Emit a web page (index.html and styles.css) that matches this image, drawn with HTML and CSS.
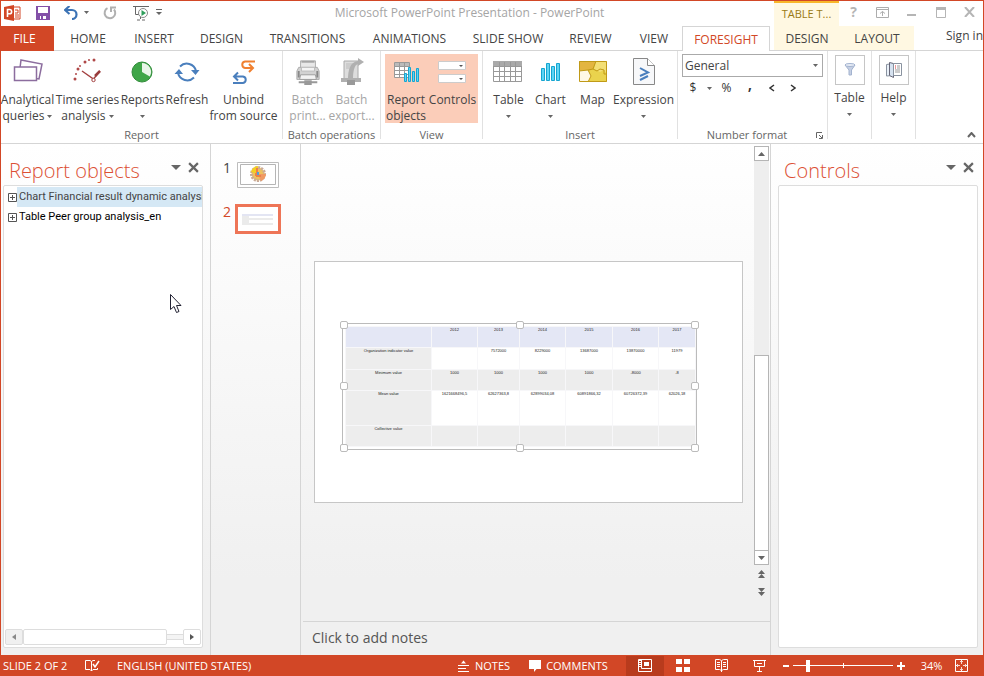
FILE: index.html
```html
<!DOCTYPE html>
<html lang="en">
<head>
<meta charset="utf-8">
<title>Microsoft PowerPoint Presentation - PowerPoint</title>
<link rel="stylesheet" href="styles.css">
</head>
<body>
<svg class="defs" aria-hidden="true">
  <symbol id="caret" viewBox="0 0 5 3"><path d="M0 0h5L2.5 3z" fill="#666"/></symbol>
  <symbol id="close" viewBox="0 0 10 10"><path d="M1 1l8 8M9 1L1 9" stroke="#666" stroke-width="2" fill="none"/></symbol>
  <symbol id="printer" viewBox="0 0 28 30">
    <path d="M6 3h16v9H6z" fill="#e8e8e8" stroke="#aaa"/><path d="M7 3h14v2H7z" fill="#a5a5a5"/>
    <path d="M4 10h20l2 4v9H2v-9z" fill="#d2d2d2" stroke="#aaa"/><path d="M7 10h14v4H7z" fill="#f4f4f4" stroke="#bbb"/>
    <path d="M6 18h16l1 5H5z" fill="#f3f3f3" stroke="#999"/><path d="M3 14h2v7H3zM23 14h2v7h-2z" fill="#888"/>
    <path d="M4 25h20v2H4zM10 24h8v5h-8z" fill="#999"/>
  </symbol>
</svg>
<div class="window">
  <header class="titlebar">
    <div class="quick">
      <svg width="18" height="16" viewBox="0 0 18 16"><path d="M0 2l10-2v16L0 14z" fill="#d24726"/><path d="M10 2h6v12h-6" fill="#fff" stroke="#d24726"/><path d="M11 5h3v3h-3M11 10h4M11 12h4" stroke="#d24726" fill="none"/><path d="M3.500 12V4.500h2a2 2 0 010 4.300h-2" stroke="#fff" stroke-width="1.600" fill="none"/></svg>
      <button aria-label="Save"><svg width="14" height="14" viewBox="0 0 14 14"><path d="M0 0h14v14H0z" fill="#8350a8"/><path d="M2 1h10v6H2zM4 10h6v3H4z" fill="#fff"/><path d="M5 10h2v3H5z" fill="#8350a8"/></svg></button>
      <button aria-label="Undo"><svg width="14" height="14" viewBox="0 0 14 14"><path d="M1 4h7a4.500 4.500 0 010 9" fill="none" stroke="#3c73b5" stroke-width="2.200"/><path d="M5.500 0L1 4l4.500 4" fill="none" stroke="#3c73b5" stroke-width="2.200"/></svg></button>
      <button aria-label="Undo list" class="slim"><svg width="5" height="3"><use href="#caret"/></svg></button>
      <button aria-label="Repeat"><svg width="14" height="14" viewBox="0 0 14 14"><path d="M4.500 2.200A5.300 5.300 0 1011 3.500" fill="none" stroke="#b0b0b0" stroke-width="2"/><path d="M8 6V1.500h5" fill="none" stroke="#b0b0b0" stroke-width="2"/></svg></button>
      <button aria-label="Start slide show" class="show"><svg width="17" height="16" viewBox="0 0 17 16"><path d="M0 1.500h16M2.500 2v7.500H7M7.500 11v3M4 15h3M9 15h3" fill="none" stroke="#666"/><circle cx="10" cy="8" r="4.500" fill="#fff" stroke="#888"/><path d="M8.500 5l4.500 3-4.500 3z" fill="#2e9e5b"/></svg></button>
      <button aria-label="Customize" class="slim"><svg width="6" height="7" viewBox="0 0 6 7"><path d="M0 .5h6" stroke="#666"/><path d="M0 3h6L3 6z" fill="#666"/></svg></button>
    </div>
    <h1>Microsoft PowerPoint Presentation - PowerPoint</h1>
    <div class="context">TABLE T...</div>
    <div class="winbuttons">
      <button aria-label="Help" class="q">?</button>
      <button aria-label="Ribbon display"><svg width="13" height="11" viewBox="0 0 13 11" fill="none" stroke="#adadad"><path d="M.5.5h12v10H.5zM.5 2.500h12M6.500 9V4.500M4 6.500l2.500-2L9 6.500"/></svg></button>
      <button aria-label="Minimize"><svg width="9" height="10"><path d="M0 7h9v2H0z" fill="#b5b5b5"/></svg></button>
      <button aria-label="Maximize"><svg width="10" height="11"><path d="M.5.5h9v10h-9z" fill="none" stroke="#b5b5b5"/><path d="M0 0h10v3H0z" fill="#b5b5b5"/></svg></button>
      <button aria-label="Close"><svg width="11" height="10" viewBox="0 0 11 10"><path d="M1 0l9 10M10 0L1 10" stroke="#b5b5b5" stroke-width="2"/></svg></button>
    </div>
  </header>
  <nav class="tabs">
    <button class="file">FILE</button><button>HOME</button><button>INSERT</button><button>DESIGN</button><button>TRANSITIONS</button><button>ANIMATIONS</button><button>SLIDE SHOW</button><button>REVIEW</button><button>VIEW</button><button class="active">FORESIGHT</button>
    <button class="ctx first">DESIGN</button><button class="ctx">LAYOUT</button>
    <a href="#" class="signin">Sign in</a>
  </nav>
  <section class="ribbon">
    <div class="group g-report">
      <div class="tools">
        <button><svg width="30" height="28" viewBox="0 0 30 28"><g fill="#fff" stroke="#8c6d9e" stroke-width="1.500"><path d="M8 2l21 4-3 15-20-3z"/><path d="M1.500 9h22v13.500h-22z"/></g></svg><span>Analytical<br>queries <svg class="caret"><use href="#caret"/></svg></span></button>
        <button><svg width="30" height="28" viewBox="0 0 30 28"><g fill="#b04848"><circle cx="3" cy="21" r="1.500"/><circle cx="4" cy="16" r="1"/><circle cx="6" cy="11" r="1.500"/><circle cx="8" cy="8" r="1"/><circle cx="13" cy="4" r="1.500"/><circle cx="17" cy="2" r="1"/><circle cx="22" cy="2" r="1.500"/></g><path d="M10 13l11.500 8L28 13" fill="none" stroke="#a34040" stroke-width="1.400"/><path d="M23 18l5-5" stroke="#983c3c" stroke-width="2.500"/><circle cx="21.500" cy="22" r="1.700" fill="#fff" stroke="#a34040"/></svg><span>Time series<br>analysis <svg class="caret"><use href="#caret"/></svg></span></button>
        <button><svg width="24" height="28" viewBox="0 0 24 28"><circle cx="11" cy="14" r="10" fill="#3fa648" stroke="#328c3b"/><path d="M11 14V5a9 9 0 017.800 13.500z" fill="#e9f6e9"/></svg><span>Reports<br><svg class="caret"><use href="#caret"/></svg></span></button>
        <button><svg width="26" height="28" viewBox="0 0 26 28"><g fill="none" stroke="#4a7fbd" stroke-width="2"><path d="M6 8.500a9.500 9.500 0 0116 4.500M20 19.500a9.500 9.500 0 01-16-4.500"/></g><path d="M17 12h8.500l-4 5zM.5 16H9l-4-5z" fill="#4a7fbd"/></svg><span>Refresh</span></button>
        <button><svg width="24" height="28" viewBox="0 0 24 28" fill="none" stroke-width="2"><path d="M23 3.500H13a3.300 3.300 0 000 6.500h7M17 6l4 4-4 4" stroke="#f08030"/><path d="M10 16h1a3.300 3.300 0 010 9H3" stroke="none"/><path d="M1 25h10a3.300 3.300 0 000-6.500H3M6 14.500l-4 4 4 4" stroke="#4a7fbd"/></svg><span>Unbind<br>from source</span></button>
      </div><h2>Report</h2>
    </div>
    <div class="group g-batch">
      <div class="tools">
        <button disabled><svg width="26" height="28"><use href="#printer"/></svg><span>Batch<br>print...</span></button>
        <button disabled><svg width="28" height="28" viewBox="0 0 28 28"><path d="M6 3h14v20H6z" fill="#ddd" stroke="#aaa"/><path d="M8 6h8M8 8h8M8 10h5" stroke="#bbb"/><path d="M10 22C10 12 12 4 20 3V0l6 4-6 4V6c-4 1-5 8-5 16z" fill="#b0b0b0"/><path d="M3 20h20v4H3z" fill="#b0b0b0"/><path d="M9 22h8v5H9z" fill="#999"/></svg><span>Batch<br>export...</span></button>
      </div><h2>Batch operations</h2>
    </div>
    <div class="group g-view">
      <div class="tools">
        <button><svg width="28" height="28" viewBox="0 0 28 28"><path d="M2.500 4.500h15v15h-15z" fill="#fff" stroke="#999"/><path d="M3 5h14v3H3z" fill="#bbb"/><path d="M3 8.500h14M3 12.500h14M3 16.500h14M7.500 5v14M12.500 5v14" stroke="#999"/><g fill="#5dd4f4" stroke="#16a5d0"><path d="M12.500 15.500h2v8h-2zM16.500 9.500h2v14h-2zM20.500 13.500h2v10h-2zM24.500 10.500h2v13h-2z"/></g></svg><span>Report<br>objects</span></button>
        <button><svg width="28" height="28" viewBox="0 0 28 28"><path d="M.5 3.500h27v8H.5zM.5 16.500h27v8H.5z" fill="#fff" stroke="#ccc"/><path d="M21 7h4l-2 2zM21 20h4l-2 2z" fill="#555"/></svg><span>Controls</span></button>
      </div><h2>View</h2>
    </div>
    <div class="group g-insert">
      <div class="tools">
        <button><svg width="30" height="28" viewBox="0 0 30 28"><path d="M.5 3.500h28v20h-28z" fill="#fff" stroke="#999"/><path d="M0 3h29v5H0z" fill="#aaa"/><path d="M1 8.500h27M1 13.500h27M1 18.500h27M6.500 4v20M11.500 4v20M17.500 4v20M22.500 4v20" stroke="#999" fill="none"/></svg><span>Table<br><svg class="caret"><use href="#caret"/></svg></span></button>
        <button><svg width="20" height="28" viewBox="0 0 20 28" fill="#5dd4f4" stroke="#16a5d0"><path d="M.5 10.500h3v12h-3zM5.500 5.500h3v17h-3zM10.500 8.500h3v14h-3zM15.500 5.500h3v17h-3z"/></svg><span>Chart<br><svg class="caret"><use href="#caret"/></svg></span></button>
        <button><svg width="30" height="28" viewBox="0 0 30 28"><path d="M1 3h28v21H1z" fill="#ead34d"/><path d="M1 3h17l-3 8-4 2H1z" fill="#e3b541"/><path d="M1 13l9-1 3 6-3 6H1z" fill="#fff8e6"/><path d="M18 3h11v13l-3-4-4 2-6-3z" fill="#f3df75"/><path d="M1.500 3.500h27v20h-27zM1 13l9-1 3 6-3 6M10 12l5-1 3-8M15 11l4 2 3-2 4 1v4h3" fill="none" stroke="#c09a18"/></svg><span>Map</span></button>
        <button><svg width="22" height="28" viewBox="0 0 22 28"><path d="M.5.5h14l7 7v19H.5z" fill="#f7f8fa" stroke="#888"/><path d="M14.500.5v7h7" fill="#fff" stroke="#888"/><path d="M7 10l8 4.500L7 18M15 18l-8 4" fill="none" stroke="#4a7fbd" stroke-width="2"/></svg><span>Expression<br><svg class="caret"><use href="#caret"/></svg></span></button>
      </div><h2>Insert</h2>
    </div>
    <div class="group g-number">
      <div class="tools">
        <label class="combo"><select aria-label="Number format"><option>General</option></select><svg class="caret"><use href="#caret"/></svg></label>
        <div class="formats"><button>$</button><button aria-label="Currencies"><svg class="caret"><use href="#caret"/></svg></button><button>%</button><button class="comma">,</button><button aria-label="Fewer decimals"><svg width="6" height="8"><path d="M5 1L1 4l4 3" fill="none" stroke="#333" stroke-width="1.500"/></svg></button><button aria-label="More decimals"><svg width="6" height="8"><path d="M1 1l4 3-4 3" fill="none" stroke="#333" stroke-width="1.500"/></svg></button></div>
      </div>
      <h2>Number format <svg class="launch" width="7" height="7" viewBox="0 0 7 7"><path d="M.5 6V.5H6M3 3l3 3M6.500 3v3.500H3" fill="none" stroke="#666"/></svg></h2>
    </div>
    <div class="group g-mini"><button><i><svg width="12" height="14" viewBox="0 0 12 14"><path d="M1 2l4 5v5h2.500V7l3.500-5z" fill="#c5cfe3" stroke="#a3b3cf"/><ellipse cx="6" cy="2" rx="5" ry="1.500" fill="#e8edf6" stroke="#a3b3cf"/></svg></i><span>Table<br><svg class="caret"><use href="#caret"/></svg></span></button></div>
    <div class="group g-mini"><button><i><svg width="18" height="18" viewBox="0 0 18 18"><path d="M1.500 3.500l7-1v12l-7 .5z" fill="#e9f0f8" stroke="#8a93a0"/><path d="M4.500 1.500l4 1v14l-4-2z" fill="#d6e2f0" stroke="#667"/><path d="M8.500 2.500h8v12h-8z" fill="#fff" stroke="#8a93a0"/><path d="M10 5h1M10 7h1" stroke="#d33"/><path d="M12 5h3M12 7h3M10 9h5M10 11h5" stroke="#999"/></svg></i><span>Help<br><svg class="caret"><use href="#caret"/></svg></span></button></div>
    <button class="collapse" aria-label="Collapse ribbon"><svg width="9" height="6"><path d="M1 5l3.500-4L8 5" fill="none" stroke="#666" stroke-width="2"/></svg></button>
  </section>
  <main class="work">
    <aside class="pane left">
      <div class="panehead"><h2>Report objects</h2><button aria-label="Pane options"><svg width="10" height="5" viewBox="0 0 10 5"><path d="M0 0h10L5 5z" fill="#666"/></svg></button><button aria-label="Close pane"><svg width="11" height="11"><use href="#close"/></svg></button></div>
      <div class="box">
        <ul class="tree">
          <li class="sel"><button aria-label="Expand"><svg width="9" height="9"><path d="M.5.5h8v8h-8zM2 4.500h5M4.500 2v5" fill="none" stroke="#555"/></svg></button><span>Chart Financial result dynamic analysis</span></li>
          <li><button aria-label="Expand"><svg width="9" height="9"><path d="M.5.5h8v8h-8zM2 4.500h5M4.500 2v5" fill="none" stroke="#555"/></svg></button><span>Table Peer group analysis_en</span></li>
        </ul>
        <div class="hscroll"><button aria-label="Scroll left" disabled><svg width="4" height="6"><path d="M4 0v6L0 3z" fill="#888"/></svg></button><div class="thumb"></div><div class="track"></div><button aria-label="Scroll right"><svg width="4" height="6"><path d="M0 0v6l4-3z" fill="#555"/></svg></button></div>
      </div>
    </aside>
    <nav class="slides">
      <div class="slide-item"><b>1</b><svg width="42" height="26" viewBox="0 0 42 26"><path d="M.5.5h41v25H.5z" fill="#fff" stroke="#bdbdbd"/><path d="M3.500 2.500h35v20h-35z" fill="none" stroke="#b5b5b5"/><circle cx="21" cy="12" r="6.500" fill="#efc25c" stroke="#c9aa98" stroke-width="3" stroke-dasharray="2 1"/><path d="M21 12V4a8 8 0 00-7 6z" fill="#f4cf22"/><path d="M21 12h8a8 8 0 01-5 7z" fill="#f09a62"/><path d="M20 6v8h4M19 11v3" stroke="#ec7f4b" stroke-width="2" fill="none"/><path d="M20 10h2v3h-2z" fill="#4ea0dd"/></svg></div>
      <div class="slide-item on"><b>2</b><svg width="46" height="30" viewBox="0 0 46 30"><path d="M1.500 1.500h43v27h-43z" fill="#fff" stroke="#ee7557" stroke-width="3"/><path d="M7 10h31v2H7z" fill="#e3e5f3"/><path d="M7 12h7v9H7zM14 14h24v2H14zM14 19h24v2H14z" fill="#ebebeb"/></svg></div>
    </nav>
    <section class="editor">
      <div class="canvas">
        <div class="stage">
          <div class="slide">
            <div class="frame">
              <table>
                <colgroup><col class="c0"><col class="c1"><col class="c2"><col class="c1"><col class="c3"><col class="c1"><col class="c4"></colgroup>
                <tr class="head"><th></th><th>2012</th><th>2013</th><th>2014</th><th>2015</th><th>2016</th><th>2017</th></tr>
                <tr><th>Organization indicator value</th><td></td><td>7572000</td><td>8229000</td><td>13687000</td><td>13870000</td><td>11979</td></tr>
                <tr class="alt"><th>Minimum value</th><td>1000</td><td>1000</td><td>1000</td><td>1000</td><td>-8000</td><td>-8</td></tr>
                <tr class="tall"><th>Mean value</th><td>1621668496,5</td><td>62627363,8</td><td>62899034,08</td><td>60891866,32</td><td>60726372,39</td><td>62026,18</td></tr>
                <tr class="alt"><th>Collective value</th><td></td><td></td><td></td><td></td><td></td><td></td></tr>
              </table>
              <i class="h nw"></i><i class="h n"></i><i class="h ne"></i><i class="h w"></i><i class="h e"></i><i class="h sw"></i><i class="h s"></i><i class="h se"></i>
            </div>
          </div>
        </div>
        <div class="vscroll">
          <button aria-label="Scroll up"><svg width="7" height="4"><path d="M0 4h7L3.500 0z" fill="#666"/></svg></button>
          <div class="track"></div><div class="thumb"></div>
          <button aria-label="Scroll down"><svg width="7" height="4"><path d="M0 0h7L3.500 4z" fill="#666"/></svg></button>
          <button class="page" aria-label="Previous slide"><svg width="7" height="8"><path d="M0 4h7L3.500 0zM0 8h7L3.500 4z" fill="#666"/></svg></button>
          <button class="page" aria-label="Next slide"><svg width="7" height="8"><path d="M0 0h7L3.500 4zM0 4h7L3.500 8z" fill="#666"/></svg></button>
        </div>
      </div>
      <div class="notes">Click to add notes</div>
    </section>
    <aside class="pane right">
      <div class="panehead"><h2>Controls</h2><button aria-label="Pane options"><svg width="10" height="5" viewBox="0 0 10 5"><path d="M0 0h10L5 5z" fill="#666"/></svg></button><button aria-label="Close pane"><svg width="11" height="11"><use href="#close"/></svg></button></div>
      <div class="box"></div>
    </aside>
    <svg class="cursor" width="13" height="20" viewBox="0 0 13 20"><path d="M.5.5v15l3.500-3 2.500 6 2.500-1-2.500-6H11z" fill="#fff" stroke="#223"/></svg>
  </main>
  <footer class="status">
    <span class="count">SLIDE 2 OF 2</span>
    <button class="proof" aria-label="Proofing"><svg width="16" height="13" viewBox="0 0 16 13" fill="none" stroke="#fff"><path d="M6.500 2.500L5 1.500H.5v9H5l1.500 1.500L8 10.500h4.500V9M6.500 2.500V12M6.500 2.500L8 1.500h2"/><path d="M8 5l2 3 4-6" stroke-width="1.500"/></svg></button>
    <span>ENGLISH (UNITED STATES)</span>
    <span class="grow"></span>
    <button class="notesbtn"><svg width="12" height="12" viewBox="0 0 12 12"><path d="M3 3.500L5.500.5 8 3.500z" fill="#fff"/><path d="M0 5.500h11M0 8.500h8M0 11.500h11" stroke="#fff"/></svg>NOTES</button>
    <button class="comments"><svg width="12" height="12" viewBox="0 0 12 12"><path d="M0 0h12v9H7.500L5 12V9H0z" fill="#fff"/></svg>COMMENTS</button>
    <button class="view on" aria-label="Normal"><svg width="14" height="13" viewBox="0 0 14 13"><path d="M.5.5h13v12H.5zM3.500 1v8.500H13" fill="none" stroke="#fff"/><path d="M1 1h2v1H1zM1 3h2v1H1zM1 5h2v1H1zM1 7h2v1H1zM6 3h5v4H6z" fill="#fff"/></svg></button>
    <button class="view" aria-label="Slide sorter"><svg width="14" height="13"><path d="M0 0h6v5H0zM8 0h6v5H8zM0 8h6v5H0zM8 8h6v5H8z" fill="#fff"/></svg></button>
    <button class="view" aria-label="Reading view"><svg width="13" height="13" viewBox="0 0 13 13" fill="none" stroke="#fff"><path d="M.5.500h4l2 1 2-1h4v10h-4l-2 1-2-1h-4zM6.500 2v11M2 3.500h3M2 5.500h3M2 7.500h3M8 3.500h3M8 5.500h3M8 7.500h3"/></svg></button>
    <button class="view" aria-label="Slide show"><svg width="13" height="13" viewBox="0 0 13 13" fill="none" stroke="#fff"><path d="M0 1.500h13M1.500 2v5.500h10V2M6.500 8v4M4 12.500h5M4 4.500h5"/></svg></button>
    <button class="zoomb" aria-label="Zoom out"><svg width="6" height="8"><path d="M0 3h6v2H0z" fill="#fff"/></svg></button>
    <span class="range"><input type="range" aria-label="Zoom" min="0" max="100" value="14"></span>
    <button class="zoomb" aria-label="Zoom in"><svg width="8" height="8"><path d="M3 0h2v3h3v2H5v3H3V5H0V3h3z" fill="#fff"/></svg></button>
    <span class="pct">34%</span>
    <button class="fit" aria-label="Fit slide"><svg width="13" height="13" viewBox="0 0 13 13" fill="none" stroke="#fff"><path d="M.5.5h12v12H.5z"/><path d="M6.500 1v4M5 3l1.500-1.500L8 3M6.500 12V8M5 10l1.500 1.500L8 10M1 6.500h4M8 6.500h4M3 5L1.500 6.500 3 8M10 5l1.500 1.500L10 8" stroke-width=".8"/></svg></button>
  </footer>
</div>
</body>
</html>
```

FILE: styles.css
```css
* { box-sizing: border-box; }
body { margin: 0; font: 12px/16px "Open Sans", "Noto Sans", sans-serif; color: #444; background: #fff; }
button { border: 0; padding: 0; margin: 0; background: none; font: inherit; color: inherit; }
h1, h2 { margin: 0; font: inherit; }
svg { display: block; flex: none; }
.defs { position: absolute; width: 0; height: 0; }
.caret { display: inline-block; width: 5px; height: 3px; vertical-align: middle; }
.window { display: flex; flex-direction: column; min-height: 100vh; border: 1px solid #d24726; border-bottom: 0; overflow: hidden; }

.titlebar { display: grid; grid-template-columns: auto 1fr 65px 144px; height: 25px; }
.quick { display: flex; align-items: center; gap: 14px; padding: 0 3px; height: 23px; }
.quick .slim { margin-left: -8px; }
.quick .show { margin-left: 2px; }
.titlebar h1 { text-align: center; color: #a5a5a5; line-height: 24px; }
.context { background: #fff8e2; border-top: 2px solid #f8b62a; color: #9a7a14; text-align: center; line-height: 22px; font-size: 11px; }
.winbuttons { display: grid; grid-template-columns: repeat(5, 29px); height: 22px; }
.winbuttons button { display: grid; place-items: center; }
.winbuttons .q { font-size: 14px; font-weight: 700; color: #b5b5b5; }

.tabs { display: grid; grid-template-columns: 53px 66px 66px 69px 103px 101px 96px 69px 58px 88px 4px 66px 74px 1fr; height: 25px; box-shadow: inset 0 -1px #d5d5d5; }
.tabs button { line-height: 25px; white-space: nowrap; text-align: center; padding-left: 2px; }
.tabs .file { background: #d24726; color: #fff; padding: 0 6px 0 0; }
.tabs .active { background: #fff; color: #d24726; border: 1px solid #d5d5d5; border-bottom: 0; line-height: 23px; padding: 0; }
.tabs .ctx { background: #fff8e2; box-shadow: inset 0 -1px #d5d5d5; padding: 0; }
.tabs .first { grid-column: 12; }
.signin { margin-left: 32px; line-height: 20px; color: #444; text-decoration: none; white-space: nowrap; }

.ribbon { display: flex; height: 93px; border-bottom: 1px solid #d5d5d5; }
.group { display: flex; flex: none; flex-direction: column; border-right: 1px solid #e1e1e1; padding-top: 3px; height: 88px; }
.group h2 { text-align: center; line-height: 12px; font-size: 11px; color: #666; margin-top: 6px; white-space: nowrap; }
.tools { display: grid; flex: none; height: 69px; }
.tools > button { display: flex; flex-direction: column; align-items: center; padding-top: 4px; text-align: center; white-space: nowrap; }
.tools > button > span { margin-top: 6px; }
.tools > button { justify-self: center; }
button:disabled { color: #a5a5a5; }
.g-report { width: 282px; }
.g-report .tools { grid-template-columns: 53px 67px 43px 46px 67px; }
.g-batch { width: 98px; }
.g-batch .tools { grid-template-columns: 49px 39px; }
.g-view { width: 102px; }
.g-view .tools { grid-template-columns: 42px 51px; margin: 0 4px; background: #fbcdb9; }
.g-insert { width: 195px; }
.g-insert .tools { grid-template-columns: 51px 33px 51px 51px; }
.g-number { width: 150px; }
.g-number .tools { display: block; padding: 0 4px; }
.combo { position: relative; display: block; }
.combo select { appearance: none; width: 100%; height: 23px; border: 1px solid #aaa; border-radius: 0; background: #fff; padding: 0 2px; font: inherit; color: #444; }
.combo .caret { position: absolute; right: 5px; top: 10px; }
.formats { display: grid; grid-template-columns: 22px 10px 25px 22px 22px 20px; height: 22px; color: #333; }
.formats button { display: grid; place-items: center; }
.formats .comma { font-size: 16px; line-height: 10px; font-weight: 600; height: 14px; }
.g-number h2 { display: grid; grid-template-columns: 1fr 7px; align-items: center; padding: 0 4px 0 0; }
.g-mini { width: 44px; }
.g-mini button { display: flex; flex-direction: column; align-items: center; padding-top: 1px; }
.g-mini i { display: grid; place-items: center; width: 30px; height: 30px; border: 1px solid #c6c6c6; }
.g-mini span { margin-top: 5px; }
.collapse { margin: auto 7px 5px auto; }

.work { flex: 1; display: flex; position: relative; background: linear-gradient(#fff, #f0f0f0 85%); }
.pane { display: flex; flex-direction: column; flex: none; }
.left { width: 210px; border-right: 1px solid #d5d5d5; padding: 0 7px 7px 2px; }
.right { width: 213px; border-left: 1px solid #d5d5d5; padding: 0 5px 7px 7px; }
.panehead { display: flex; align-items: center; height: 41px; padding: 12px 4px 0 6px; gap: 7px; }
.panehead h2 { flex: 1; font-size: 20px; line-height: 28px; color: #dc5034; font-weight: 300; white-space: nowrap; }
.panehead button { height: 20px; margin-top: -6px; display: grid; place-items: center; }
.box { flex: 1; background: #fff; border: 1px solid #ddd; border-radius: 2px; display: flex; flex-direction: column; overflow: hidden; }
.tree { flex: 1; list-style: none; margin: 0; padding: 1px 1px 0 4px; font: 11px/20px Roboto, sans-serif; color: #000; }
.tree li { display: flex; align-items: center; height: 20px; white-space: nowrap; }
.tree span { flex: 1; padding-left: 2px; }
.tree .sel span { background: #d5e8f5; color: #444; }
.hscroll { display: flex; align-items: center; height: 18px; margin: 1px; }
.hscroll button { width: 18px; height: 16px; border: 1px solid #ddd; border-radius: 2px; display: grid; place-items: center; background: #fff; }
.hscroll button:disabled { background: #f0f0f0; }
.hscroll .thumb { width: 144px; height: 16px; border: 1px solid #ddd; border-radius: 2px; }
.hscroll .track { flex: 1; height: 6px; border: 1px solid #ddd; border-width: 1px 0; background: #f4f4f4; }
.slides { flex: none; width: 90px; border-right: 1px solid #d5d5d5; padding-top: 16px; display: flex; flex-direction: column; gap: 14px; }
.slide-item { display: flex; padding-left: 12px; gap: 6px; height: 30px; }
.slide-item b { font-weight: 400; font-size: 14px; line-height: 16px; width: 8px; }
.slide-item svg { margin-top: 2px; }
.slide-item.on { color: #d24726; gap: 4px; }
.slide-item.on svg { margin-top: 0; }
.editor { flex: 1; min-width: 0; display: flex; flex-direction: column; }
.canvas { flex: 1; display: flex; padding-right: 1px; }
.stage { flex: 1; min-width: 0; display: grid; grid-template-columns: minmax(0, 1fr); align-items: center; padding: 0 11px 1px 13px; }
.slide { aspect-ratio: 429 / 242; background: #fff; border: 1px solid #c6c6c6; padding: 61px 45px 0 27px; }
.frame { position: relative; border: 1px solid #bbb; padding: 2px; height: 127px; }
.frame table { width: 100%; height: 121px; table-layout: fixed; border-collapse: collapse; border: 1px solid #bbb; font: 4px/5px "Liberation Sans", sans-serif; color: #222; }
.c0 { width: 86px; } .c1 { width: 46px; } .c2 { width: 42px; } .c3 { width: 47px; } .c4 { width: 37px; }
.frame th, .frame td { padding: 0; height: 21px; vertical-align: top; text-align: center; font-weight: 400; border: 1px solid #f7f7f9; white-space: nowrap; }
.frame tr > :first-child { background: #ededed; }
.frame .alt td { background: #ededed; }
.frame .head th, .frame .head > :first-child { background: #e4e7f5; }
.frame .tall td { height: 34px; }
.h { position: absolute; width: 8px; height: 8px; background: #fff; border: 1px solid #bbb; border-radius: 2px; }
.nw, .n, .ne { top: -3px; } .sw, .s, .se { bottom: -3px; } .w, .e { top: 58px; }
.nw, .w, .sw { left: -3px; } .ne, .e, .se { right: -3px; } .n, .s { left: 50%; margin-left: -4px; }
.vscroll { flex: none; width: 15px; padding-top: 2px; display: flex; flex-direction: column; margin-bottom: 20px; }
.vscroll button { height: 15px; border: 1px solid #b5b5b5; background: #fff; display: grid; place-items: center; flex: none; }
.vscroll .track { flex: 1; background: #eee; }
.vscroll .thumb { height: 195px; background: #fff; border: 1px solid #b5b5b5; border-bottom: 0; }
.vscroll .page { border: 0; background: none; height: 18px; }
.notes { height: 34px; border-top: 1px solid #d5d5d5; padding-left: 9px; font-size: 14px; line-height: 32px; margin-left: 2px; color: #555; }
.cursor { position: absolute; left: 169px; top: 150px; }

.status { height: 21px; margin: 0 -1px; background: #d24726; color: #fff; display: flex; align-items: center; font-size: 11px; white-space: nowrap; }
.status button { display: flex; align-items: center; justify-content: center; gap: 5px; }
.count { margin-left: 3px; width: 82px; }
.proof { margin-right: 16px; }
.grow { flex: 1; }
.notesbtn { width: 52px; margin-right: 20px; }
.comments { width: 77px; margin-right: 19px; }
.status .view { width: 38px; height: 20px; }
.view.on { background: #b83b1d; }
.zoomb { width: 14px; margin-left: 1px; }
.range { position: relative; display: block; width: 100px; height: 12px; }
.range::before { content: ""; position: absolute; left: 50%; top: 3px; width: 1px; height: 5px; background: #fff; }
.range input { appearance: none; display: block; width: 100%; height: 12px; margin: 0; background: linear-gradient(#fff, #fff) center / 100% 1px no-repeat; }
.range input::-webkit-slider-thumb { appearance: none; width: 4px; height: 12px; background: #fff; }
.pct { width: 47px; text-align: center; }
.fit { margin-right: 16px; }
```
